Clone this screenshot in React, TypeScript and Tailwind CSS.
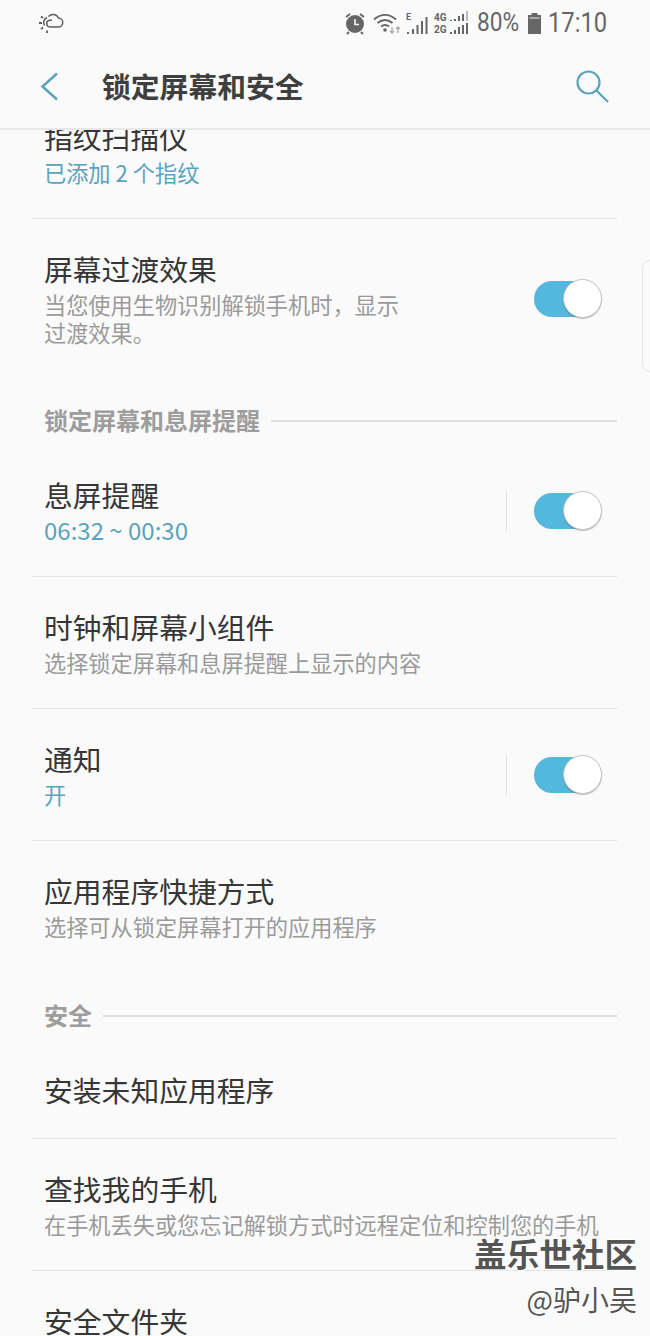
const font = "font-['Noto_Sans_CJK_SC','Noto_Sans',sans-serif]";

function Toggle() {
  return (
    <div className="relative h-[36px] w-[68px] shrink-0">
      <div className="absolute left-0 top-0 h-[36px] w-[60px] rounded-full bg-[#54b8de]" />
      <div className="absolute right-0 top-[-2px] h-[39px] w-[39px] rounded-full border border-[#c4c4c4] bg-white shadow-[0_1px_1px_rgba(0,0,0,0.25)]" />
    </div>
  );
}

function Row({
  title,
  sub,
  teal,
  big,
  toggle,
  sep,
  divider = true,
}: {
  title: string;
  sub?: string[];
  teal?: boolean;
  big?: boolean;
  toggle?: boolean;
  sep?: boolean;
  divider?: boolean;
}) {
  return (
    <div>
      <div className="flex items-center pl-[44px] pr-[48px] pt-[30px]">
        <div className="min-w-0 flex-1">
          <div className="h-[39px] text-[28.8px] leading-[39px] text-[#363636]">{title}</div>
          {sub && (
            <div className="mb-[3px] mt-[2px]">
              {sub.map((s) => (
                <div
                  key={s}
                  className={`whitespace-nowrap leading-[28px] ${big ? "text-[24px]" : "text-[22.2px]"} ${teal ? "text-[#5ba3ba]" : "text-[#9a9a9a]"}`}
                >
                  {s}
                </div>
              ))}
            </div>
          )}
        </div>
        {toggle && (
          <div className="flex items-center">
            {sep && <div className="mr-[27px] h-[40px] w-px bg-[#dcdcdc]" />}
            <Toggle />
          </div>
        )}
      </div>
      {divider && <div className="ml-[32px] mr-[33px] mt-[29px] h-px bg-[#e4e4e4]" />}
    </div>
  );
}

function Section({ title, className }: { title: string; className: string }) {
  return (
    <div className={`flex items-center pl-[44px] pr-[33px] ${className}`}>
      <span className="mb-[2px] text-[24px] font-bold leading-[30px] text-[#9d9d9d]">{title}</span>
      <div className="ml-[11px] h-[2px] flex-1 bg-[#dedede]" />
    </div>
  );
}

function StatusIcons() {
  return (
    <div className="ml-auto flex items-center text-[#666666]">
      {/* alarm */}
      <svg width="24" height="24" viewBox="0 0 24 24" className="mr-[6px]">
        <circle cx="12" cy="13" r="9" fill="currentColor" />
        <path d="M3 6l4-3M21 6l-4-3M6 21l-2 2M18 21l2 2" stroke="currentColor" strokeWidth="2" fill="none" />
        <path d="M12 8v5.500h4" stroke="#fafafa" strokeWidth="1.600" fill="none" />
      </svg>
      {/* wifi */}
      <svg width="28" height="24" viewBox="0 0 28 24" className="mr-[5px]">
        <path d="M1 8.500c7-6 15-6 22 0M4.500 12c5-4 10-4 15 0M8 15.500c2.700-2 5.300-2 8 0" stroke="currentColor" strokeWidth="2" fill="none" />
        <circle cx="12" cy="19" r="1.800" fill="currentColor" />
        <path d="M19 16v6M17 20l2 2 2-2" stroke="#aaa" strokeWidth="1.400" fill="none" />
        <path d="M25 22v-6M23 18l2-2 2 2" stroke="#aaa" strokeWidth="1.400" fill="none" />
      </svg>
      {/* E signal */}
      <svg width="24" height="24" viewBox="0 0 24 24" className="mr-[4px]">
        <text x="0" y="9" fontSize="9" fontWeight="700" fontFamily="Roboto" fill="currentColor">E</text>
        <path d="M1 21h2v2H1zM6 18h2v5H6zM10.500 14h2v9h-2zM15 10h2v13h-2zM19.500 6h2v17h-2z" fill="currentColor" />
      </svg>
      {/* dual sim */}
      <svg width="36" height="24" viewBox="0 0 36 24" className="mr-[7px]">
        <text x="0" y="10" fontSize="10" fontWeight="700" fontFamily="Roboto" fill="currentColor">4G</text>
        <text x="0" y="22" fontSize="10" fontWeight="700" fontFamily="Roboto" fill="currentColor">2G</text>
        <path d="M16 9h2v1h-2zM20 8h2v2h-2zM24 5h2v5h-2zM28 3h2v7h-2z" fill="currentColor" />
        <path d="M32 0h2v10h-2z" fill="#bbb" />
        <path d="M16 21h2v2h-2zM20 19h2v4h-2zM24 16h2v7h-2zM28 14h2v9h-2zM32 12h2v11h-2z" fill="currentColor" />
      </svg>
      <span className="mr-[8px] inline-block w-[42px] origin-left scale-x-[0.91] whitespace-nowrap font-['Roboto',sans-serif] text-[25px] leading-[30px]">80%</span>
      <svg width="15" height="24" viewBox="0 0 15 24" className="mr-[6px]">
        <path d="M4.500 2h6v2h3.500v19H1V4h3.500z" fill="currentColor" />
        <path d="M2.500 6h10v2h-10z" fill="#a8a8a8" />
      </svg>
      <span className="inline-block w-[58px] origin-left scale-x-[0.88] whitespace-nowrap font-['Roboto',sans-serif] text-[27px] leading-[30px]">17:10</span>
    </div>
  );
}

export default function App() {
  return (
    <div className={`relative flex h-[1336px] w-[650px] flex-col overflow-hidden bg-[#fafafa] ${font}`}>
      {/* status bar */}
      <div className="flex h-[46px] shrink-0 items-center pl-[38px] pr-[44px]">
        <svg width="26" height="22" viewBox="0 0 26 22" fill="none" stroke="#5e5e5e" strokeWidth="1.500">
          <path d="M12 15h8a4.500 4.500 0 0 0 .5-9 6 6 0 0 0-10-1.500" />
          <path d="M12 15a3.500 3.500 0 0 1-1-6.800h3" />
          <path d="M9 5.500a5.500 5.500 0 0 0-2.500 8" />
          <path d="M1 11h3M3 4.500l2 1.500M3 17l2-1.500M9 18.500V21" strokeWidth="1.800" />
        </svg>
        <StatusIcons />
      </div>

      {/* header */}
      <div className="z-10 flex h-[84px] shrink-0 items-center border-b-2 border-[#e8e8e8] bg-[#fafafa] pb-[2px] pl-[40px] pr-[41px]">
        <svg width="19" height="29" viewBox="0 0 19 29" fill="none" stroke="#5ba3ba" strokeWidth="2.500">
          <path d="M17 1.500L2.500 14.500L17 27.500" />
        </svg>
        <span className="ml-[43px] text-[28.8px] font-bold leading-[40px] text-[#3f3f3f]">锁定屏幕和安全</span>
        <svg width="33" height="33" viewBox="0 0 33 33" fill="none" stroke="#5ba3ba" strokeWidth="2.200" className="ml-auto">
          <circle cx="12.500" cy="12.500" r="11" />
          <path d="M20.500 20.500L32 32" />
        </svg>
      </div>

      {/* scrolled list */}
      <div className="mt-[-43px] flex-1">
        <Row title="指纹扫描仪" sub={["已添加 2 个指纹"]} teal />
        <Row title="屏幕过渡效果" sub={["当您使用生物识别解锁手机时，显示", "过渡效果。"]} toggle divider={false} />
        <Section title="锁定屏幕和息屏提醒" className="h-[96px] pt-[48px]" />
        <Row title="息屏提醒" sub={["06:32 ~ 00:30"]} teal big toggle sep />
        <Row title="时钟和屏幕小组件" sub={["选择锁定屏幕和息屏提醒上显示的内容"]} />
        <Row title="通知" sub={["开"]} teal toggle sep />
        <Row title="应用程序快捷方式" sub={["选择可从锁定屏幕打开的应用程序"]} divider={false} />
        <Section title="安全" className="h-[97px] pt-[48px]" />
        <Row title="安装未知应用程序" />
        <Row title="查找我的手机" sub={["在手机丢失或您忘记解锁方式时远程定位和控制您的手机"]} />
        <Row title="安全文件夹" divider={false} />
      </div>

      {/* edge panel handle */}
      <div className="absolute right-[-12px] top-[260px] h-[112px] w-[20px] rounded-l-[8px] border border-[#e6e6e6]" />

      {/* watermark */}
      <div className="absolute bottom-[21px] right-[13px] flex flex-col items-end">
        <span className="text-[32.6px] font-bold leading-[40px] text-[#555] [text-shadow:1px_1px_0_#fff,-1px_-1px_0_#fff]">盖乐世社区</span>
        <span className="mt-[10px] text-[28px] leading-[32px] text-[#555] [text-shadow:1px_1px_0_#fff]">@驴小吴</span>
      </div>
    </div>
  );
}
